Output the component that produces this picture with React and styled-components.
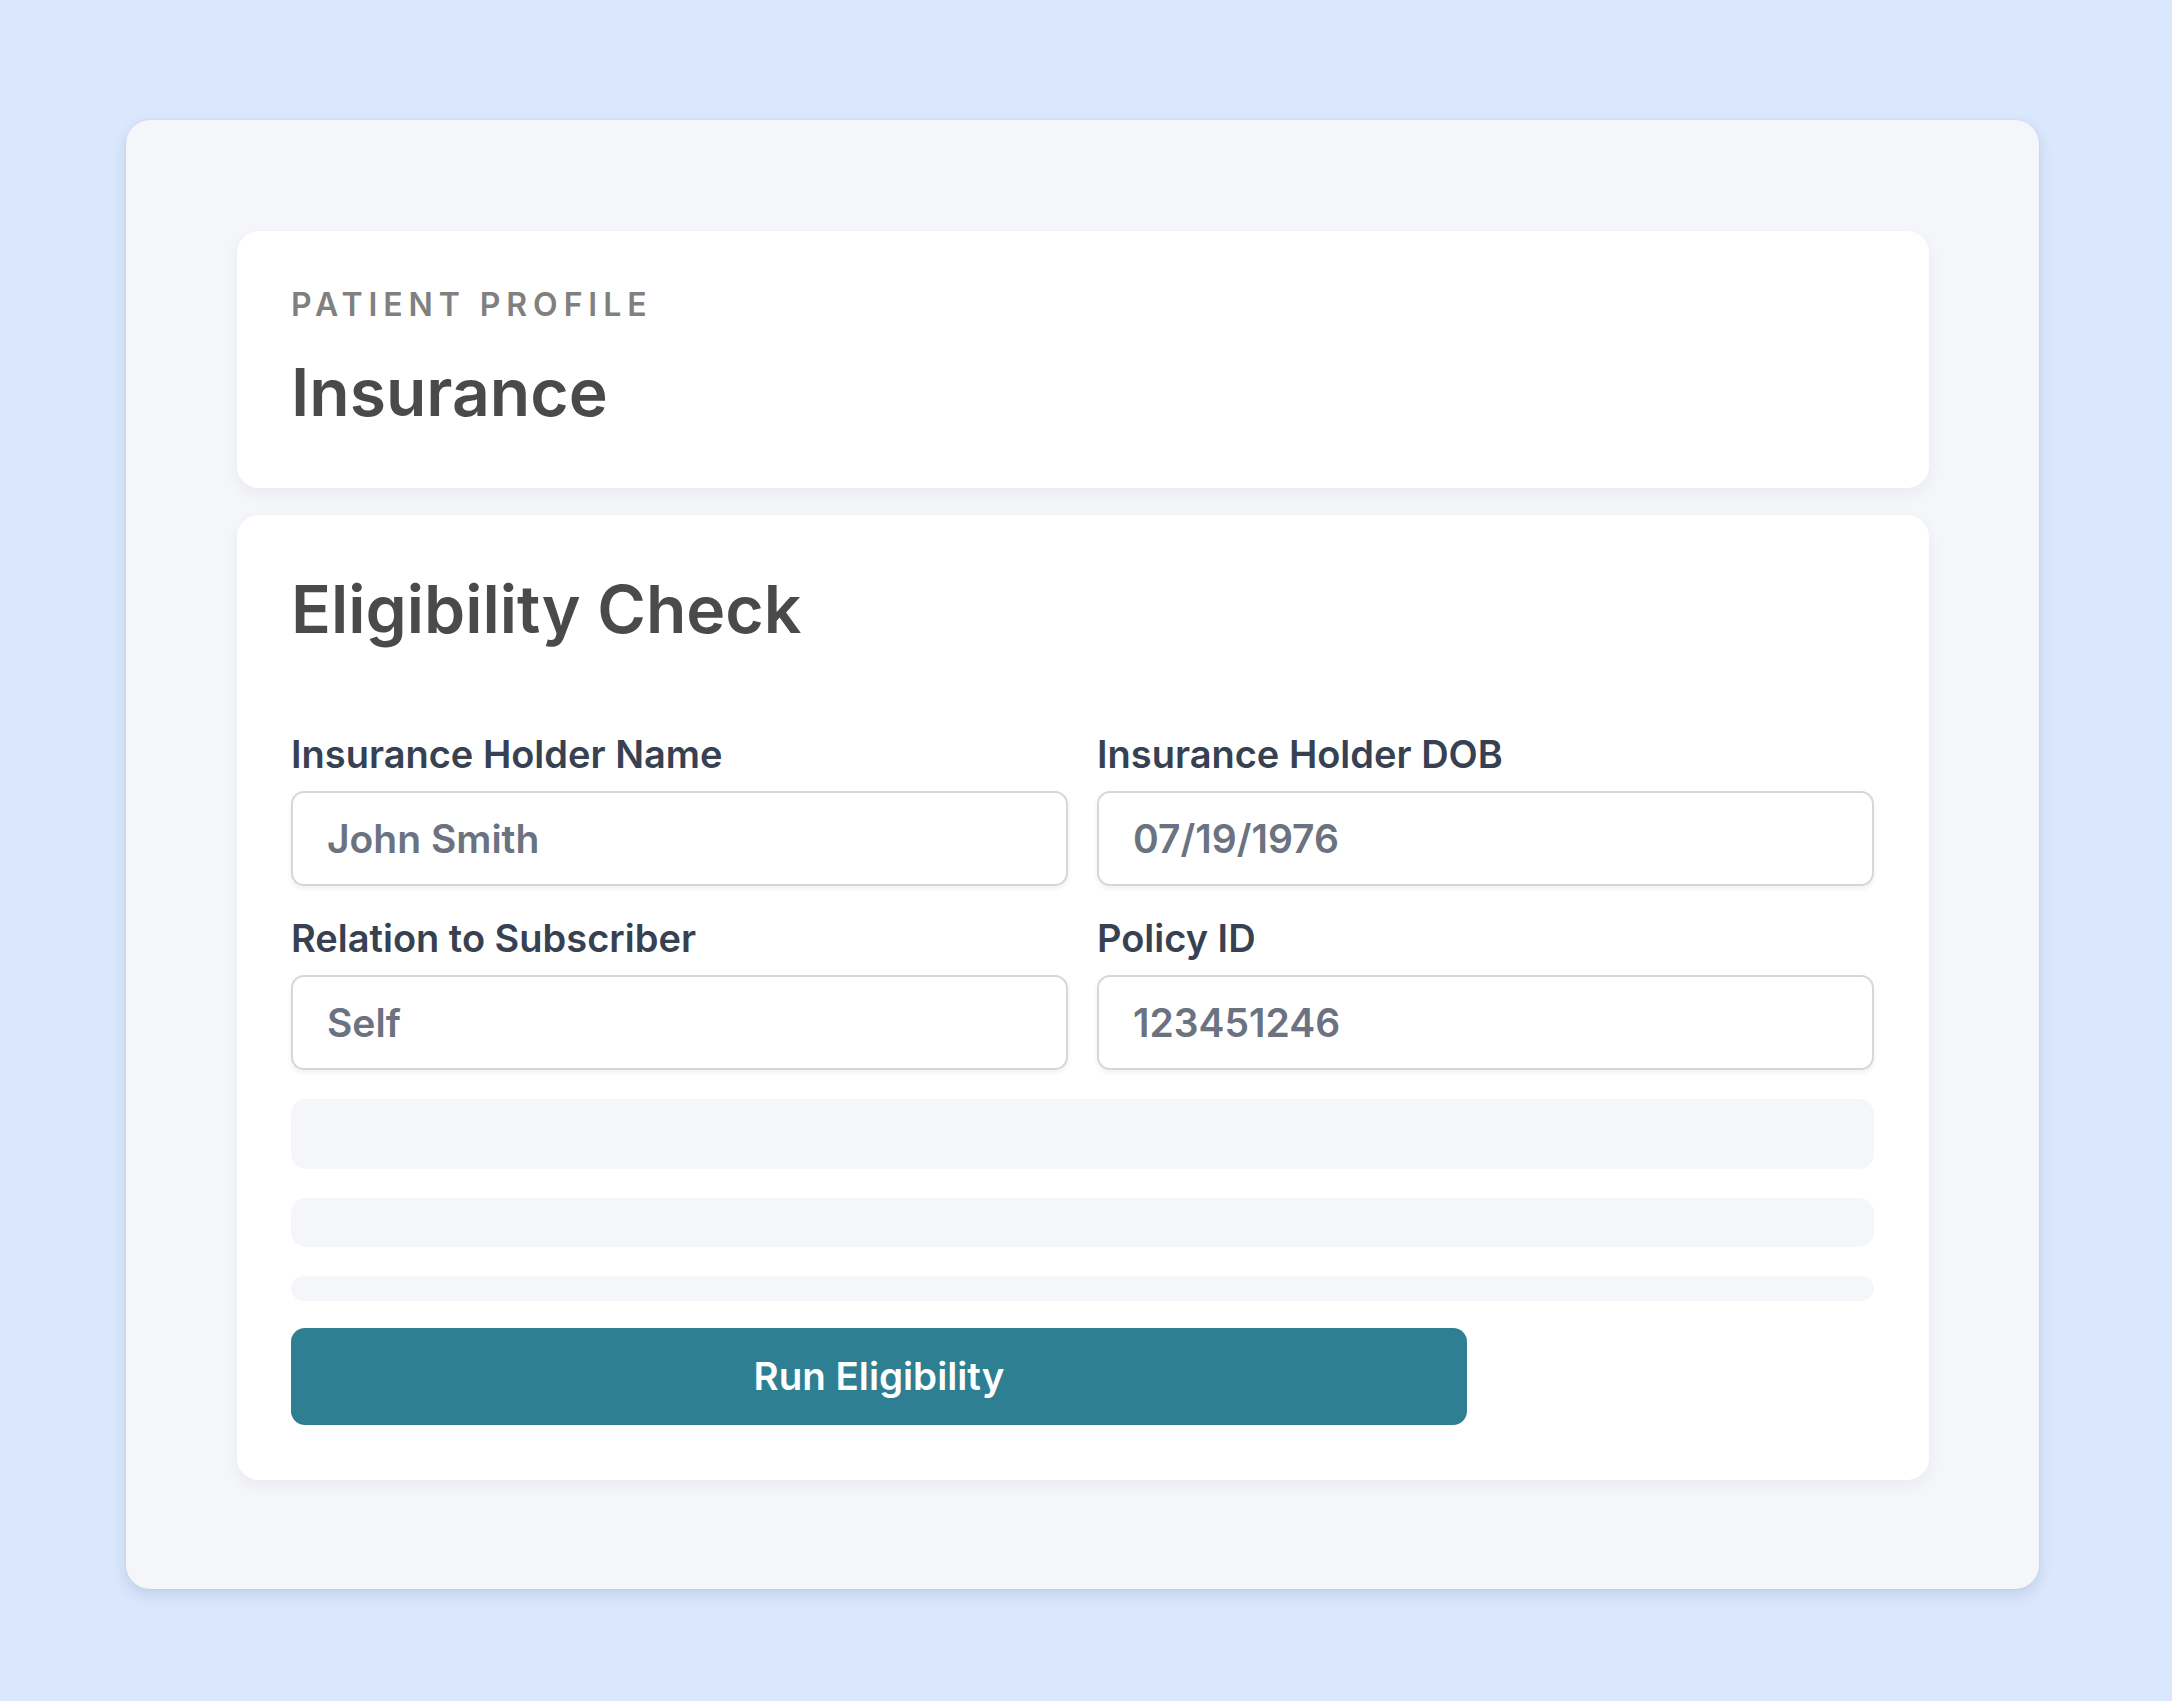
import React from 'react'
import styled, { createGlobalStyle } from 'styled-components'

const GlobalStyle = createGlobalStyle`
	html, body {
		margin: 0;
		padding: 0;
		background: #dae7fc;
		font-family: Inter, "Noto Sans", "Liberation Sans", sans-serif;
	}
	* {
		box-sizing: border-box;
	}
`

const StyledPage = styled.div`
	min-height: 1701px;
	padding: 120px 0 0 126px;
`

const StyledShell = styled.div`
	width: 1913px;
	background: #f5f6fa;
	border-radius: 24px;
	padding: 111px 110px 109px 111px;
	display: flex;
	flex-flow: column;
	gap: 27px;
	box-shadow: 0 6px 14px rgba(70, 95, 140, 0.16), 0 0 2px rgba(70, 95, 140, 0.12);
`

const StyledCard = styled.section`
	background: #ffffff;
	border-radius: 22px;
	padding: 55px 55px 55px 54px;
	display: flex;
	flex-flow: column;
	gap: 29px;
	box-shadow: 0 6px 16px rgba(30, 40, 70, 0.05);
`

const StyledEyebrow = styled.div`
	font-size: 32px;
	line-height: 1.2;
	font-weight: 600;
	letter-spacing: 0.185em;
	color: #808080;
	text-transform: uppercase;
`

const StyledTitle = styled.h1`
	margin: 0;
	font-size: 66px;
	line-height: 1.2;
	font-weight: 600;
	color: #4a4a4a;
	margin-bottom: ${ p => p.spaced ? 53 : 0 }px;
`

const StyledGrid = styled.div`
	display: grid;
	grid-template-columns: 1fr 1fr;
	gap: 29px;
`

const StyledField = styled.label`
	display: flex;
	flex-flow: column;
	gap: 14px;

	span {
		font-size: 38px;
		line-height: 46px;
		font-weight: 600;
		color: #374151;
	}
`

const StyledInput = styled.input`
	display: block;
	width: 100%;
	height: 95px;
	padding: 0 34px;
	border: 2px solid #d5d7dd;
	border-radius: 13px;
	background: #ffffff;
	font-family: inherit;
	font-size: 39px;
	font-weight: 600;
	color: #6b7280;
	outline: none;
	box-shadow: 0 3px 5px rgba(20, 30, 50, 0.06);
`

const StyledSkeleton = styled.div`
	height: ${ p => p.h }px;
	border-radius: ${ p => Math.min(15, p.h / 2) }px;
	background: #f5f6fa;
`

const StyledButton = styled.button`
	width: 1176px;
	height: 97px;
	margin-top: -2px;
	border: none;
	border-radius: 14px;
	background: #2f7f92;
	color: #ffffff;
	font-family: inherit;
	font-size: 38.5px;
	font-weight: 600;
	cursor: pointer;
`

const fields = [
	{ label: 'Insurance Holder Name', value: 'John Smith' },
	{ label: 'Insurance Holder DOB', value: '07/19/1976' },
	{ label: 'Relation to Subscriber', value: 'Self' },
	{ label: 'Policy ID', value: '123451246' },
]

export default function App() {
	return <StyledPage>
		<GlobalStyle/>
		<StyledShell>
			<StyledCard>
				<StyledEyebrow>Patient Profile</StyledEyebrow>
				<StyledTitle>Insurance</StyledTitle>
			</StyledCard>
			<StyledCard>
				<StyledTitle spaced>Eligibility Check</StyledTitle>
				<StyledGrid>
					{ fields.map(f => <StyledField key={ f.label }>
						<span>{ f.label }</span>
						<StyledInput readOnly defaultValue={ f.value }/>
					</StyledField>) }
				</StyledGrid>
				<StyledSkeleton h={ 70 }/>
				<StyledSkeleton h={ 49 }/>
				<StyledSkeleton h={ 25 }/>
				<StyledButton>Run Eligibility</StyledButton>
			</StyledCard>
		</StyledShell>
	</StyledPage>
}
